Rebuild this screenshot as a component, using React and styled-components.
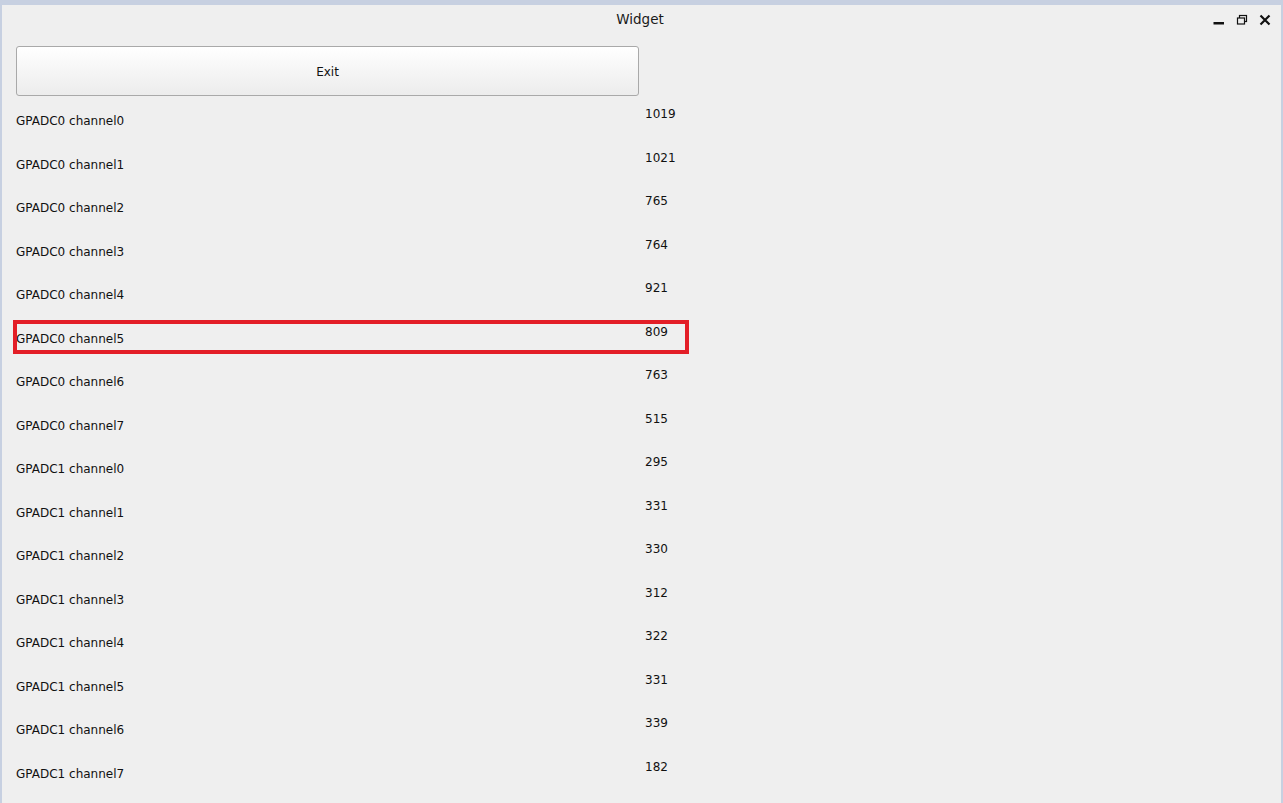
import styled, { createGlobalStyle } from "styled-components";

const GlobalStyle = createGlobalStyle`
  html, body {
    margin: 0;
    padding: 0;
    height: 100%;
    overflow: hidden;
  }
  body {
    font-family: "DejaVu Sans", "Liberation Sans", sans-serif;
    color: #111;
  }
`;

const Frame = styled.div`
  width: 1283px;
  height: 803px;
  box-sizing: border-box;
  background: #c7d0e1;
  padding: 5px 2px 0 2px;
  display: flex;
`;

const Window = styled.div`
  flex: 1;
  background: #efefef;
  display: flex;
  flex-direction: column;
  position: relative;
`;

const TitleBar = styled.div`
  height: 36px;
  display: grid;
  grid-template-columns: 1fr auto 1fr;
  align-items: center;
`;

const Title = styled.div`
  grid-column: 2;
  font-size: 13.5px;
  color: #1a1a1a;
  margin-top: -8px;
  margin-left: -3px;
`;

const Controls = styled.div`
  grid-column: 3;
  justify-self: end;
  display: flex;
  align-items: center;
  gap: 11px;
  padding-right: 10px;
  margin-top: -6px;
`;

const Content = styled.div`
  padding: 5px 0 0 14px;
  display: flex;
  flex-direction: column;
`;

const ExitButton = styled.button`
  width: 623px;
  height: 50px;
  box-sizing: border-box;
  border: 1px solid #a9a9a9;
  border-radius: 3px;
  background: linear-gradient(#ffffff, #ececec);
  font-family: inherit;
  font-size: 12px;
  color: #111;
  padding: 2px 0 0 0;
  margin-bottom: 3px;
`;

const Row = styled.div`
  position: relative;
  height: 43.5px;
  display: grid;
  grid-template-columns: 629px auto;
  font-size: 12px;
`;

const Label = styled.span`
  align-self: center;
  line-height: 14px;
  padding-top: 1px;
`;

const Value = styled.span`
  align-self: start;
  padding-top: 8px;
  line-height: 14px;
`;

const Highlight = styled.div`
  position: absolute;
  left: -3px;
  top: 3.6px;
  width: 676px;
  height: 34px;
  box-sizing: border-box;
  border: 4px solid #e31e27;
  pointer-events: none;
`;

const rows = [
  ["GPADC0 channel0", 1019],
  ["GPADC0 channel1", 1021],
  ["GPADC0 channel2", 765],
  ["GPADC0 channel3", 764],
  ["GPADC0 channel4", 921],
  ["GPADC0 channel5", 809],
  ["GPADC0 channel6", 763],
  ["GPADC0 channel7", 515],
  ["GPADC1 channel0", 295],
  ["GPADC1 channel1", 331],
  ["GPADC1 channel2", 330],
  ["GPADC1 channel3", 312],
  ["GPADC1 channel4", 322],
  ["GPADC1 channel5", 331],
  ["GPADC1 channel6", 339],
  ["GPADC1 channel7", 182],
];

const App = () => (
  <>
    <GlobalStyle />
    <Frame>
      <Window>
        <TitleBar>
          <Title>Widget</Title>
          <Controls>
            <svg width="12" height="12" viewBox="0 0 12 12">
              <rect x="0.5" y="8" width="10.5" height="2.5" fill="#111" />
            </svg>
            <svg width="12" height="12" viewBox="0 0 12 12">
              <rect x="3.5" y="1.5" width="7" height="6" fill="none" stroke="#111" strokeWidth="1.2" />
              <rect x="1.5" y="4" width="7" height="6" fill="#efefef" stroke="#111" strokeWidth="1.2" />
            </svg>
            <svg width="12" height="12" viewBox="0 0 12 12">
              <path d="M1.5 1.5 L10.5 10.5 M10.5 1.5 L1.5 10.5" stroke="#111" strokeWidth="2.2" />
            </svg>
          </Controls>
        </TitleBar>
        <Content>
          <ExitButton>Exit</ExitButton>
          {rows.map(([name, value], i) => (
            <Row key={name}>
              <Label>{name}</Label>
              <Value>{value}</Value>
              {i === 5 && <Highlight />}
            </Row>
          ))}
        </Content>
      </Window>
    </Frame>
  </>
);

export default App;
